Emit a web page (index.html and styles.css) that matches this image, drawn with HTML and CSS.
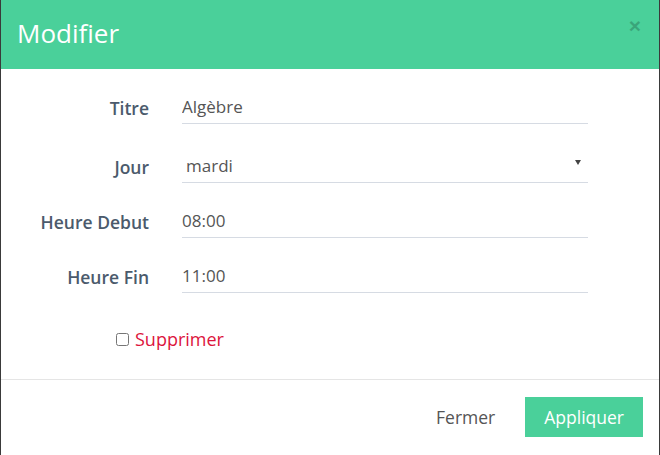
FILE: index.html
```html
<!DOCTYPE html>
<html lang="fr">
<head>
<meta charset="utf-8">
<title>Modifier</title>
<link rel="stylesheet" href="styles.css">
</head>
<body>
<div class="modal">
  <div class="modal-header">
    <h4 class="modal-title">Modifier</h4>
    <button class="close" type="button" aria-label="Close">×</button>
  </div>
  <form class="modal-body">
    <div class="form-row row-1">
      <label class="form-label" for="titre">Titre</label>
      <input class="form-control" id="titre" type="text" value="Algèbre">
    </div>
    <div class="form-row row-2">
      <label class="form-label" for="jour">Jour</label>
      <div class="select-wrap">
        <select class="form-control form-select" id="jour">
          <option>lundi</option>
          <option selected>mardi</option>
          <option>mercredi</option>
          <option>jeudi</option>
          <option>vendredi</option>
        </select>
      </div>
    </div>
    <div class="form-row row-3">
      <label class="form-label" for="debut">Heure Debut</label>
      <input class="form-control" id="debut" type="text" value="08:00">
    </div>
    <div class="form-row row-4">
      <label class="form-label" for="fin">Heure Fin</label>
      <input class="form-control" id="fin" type="text" value="11:00">
    </div>
    <div class="check-row">
      <input type="checkbox" id="supprimer" class="check">
      <label for="supprimer" class="check-label">Supprimer</label>
    </div>
  </form>
  <div class="modal-footer">
    <button type="button" class="btn btn-link">Fermer</button>
    <button type="button" class="btn btn-primary">Appliquer</button>
  </div>
</div>
</body>
</html>
```
FILE: styles.css
```css
* { box-sizing: border-box; }
html, body { margin: 0; padding: 0; background: #fff; }
body { font-family: "Open Sans", "Noto Sans", sans-serif; }

.modal {
  width: 660px;
  height: 455px;
  border-left: 1px solid #3a3a3a;
  border-right: 1px solid #3a3a3a;
  background: #fff;
  display: flex;
  flex-direction: column;
}

.modal-header {
  height: 69px;
  background: #4ad09a;
  display: flex;
  align-items: flex-start;
  justify-content: space-between;
  padding: 0 18px 0 16px;
}
.modal-title {
  margin: 15px 0 0;
  font-size: 26px;
  font-weight: 400;
  line-height: 36px;
  color: #fff;
}
.close {
  margin-top: 15px;
  padding: 0;
  border: 0;
  background: none;
  font-family: "Liberation Sans", Arial, sans-serif;
  font-size: 21px;
  font-weight: 700;
  line-height: 1;
  color: #000;
  opacity: 0.2;
}

.modal-body {
  margin: 0;
  padding: 20px 0 0;
  height: 311px;
  border-bottom: 1px solid #e5e5e5;
}

.form-row {
  display: flex;
  align-items: center;
  height: 35px;
}
.row-1 { margin-bottom: 24px; }
.row-2 { margin-bottom: 20px; }
.row-3 { margin-bottom: 20px; }

.form-label {
  width: 148px;
  margin-right: 33px;
  padding-top: 2px;
  text-align: right;
  font-size: 17.5px;
  font-weight: 600;
  color: #4b5a6c;
}

.form-control {
  width: 406px;
  height: 35px;
  margin: 0;
  padding: 0;
  border: 0;
  border-bottom: 1px solid #d6dbe3;
  border-radius: 0;
  background: transparent;
  font-family: "Open Sans", "Noto Sans", sans-serif;
  font-size: 17px;
  color: #555;
  outline: none;
}

.select-wrap {
  position: relative;
  width: 406px;
}
.form-select {
  appearance: none;
  -webkit-appearance: none;
  padding-left: 4px;
}
.select-wrap::after {
  content: "";
  position: absolute;
  right: 7px;
  top: 12px;
  border-left: 3px solid transparent;
  border-right: 3px solid transparent;
  border-top: 5px solid #444;
  pointer-events: none;
}

.check-row {
  display: flex;
  align-items: center;
  margin-top: 34px;
  padding-left: 115px;
}
.check {
  width: 13px;
  height: 13px;
  margin: 1px 6px 0 0;
}
.check-label {
  font-size: 18px;
  font-weight: 400;
  color: #dc143c;
}

.modal-footer {
  display: flex;
  justify-content: flex-end;
  align-items: center;
  gap: 30px;
  padding: 17px 16px 0 0;
}
.btn {
  border: 0;
  border-radius: 0;
  font-family: "Open Sans", "Noto Sans", sans-serif;
  font-size: 17.5px;
  cursor: pointer;
}
.btn-link {
  background: none;
  padding: 0;
  color: #555;
}
.btn-primary {
  height: 40px;
  padding: 0 19px;
  background: #4ad09a;
  color: #fff;
}
```
